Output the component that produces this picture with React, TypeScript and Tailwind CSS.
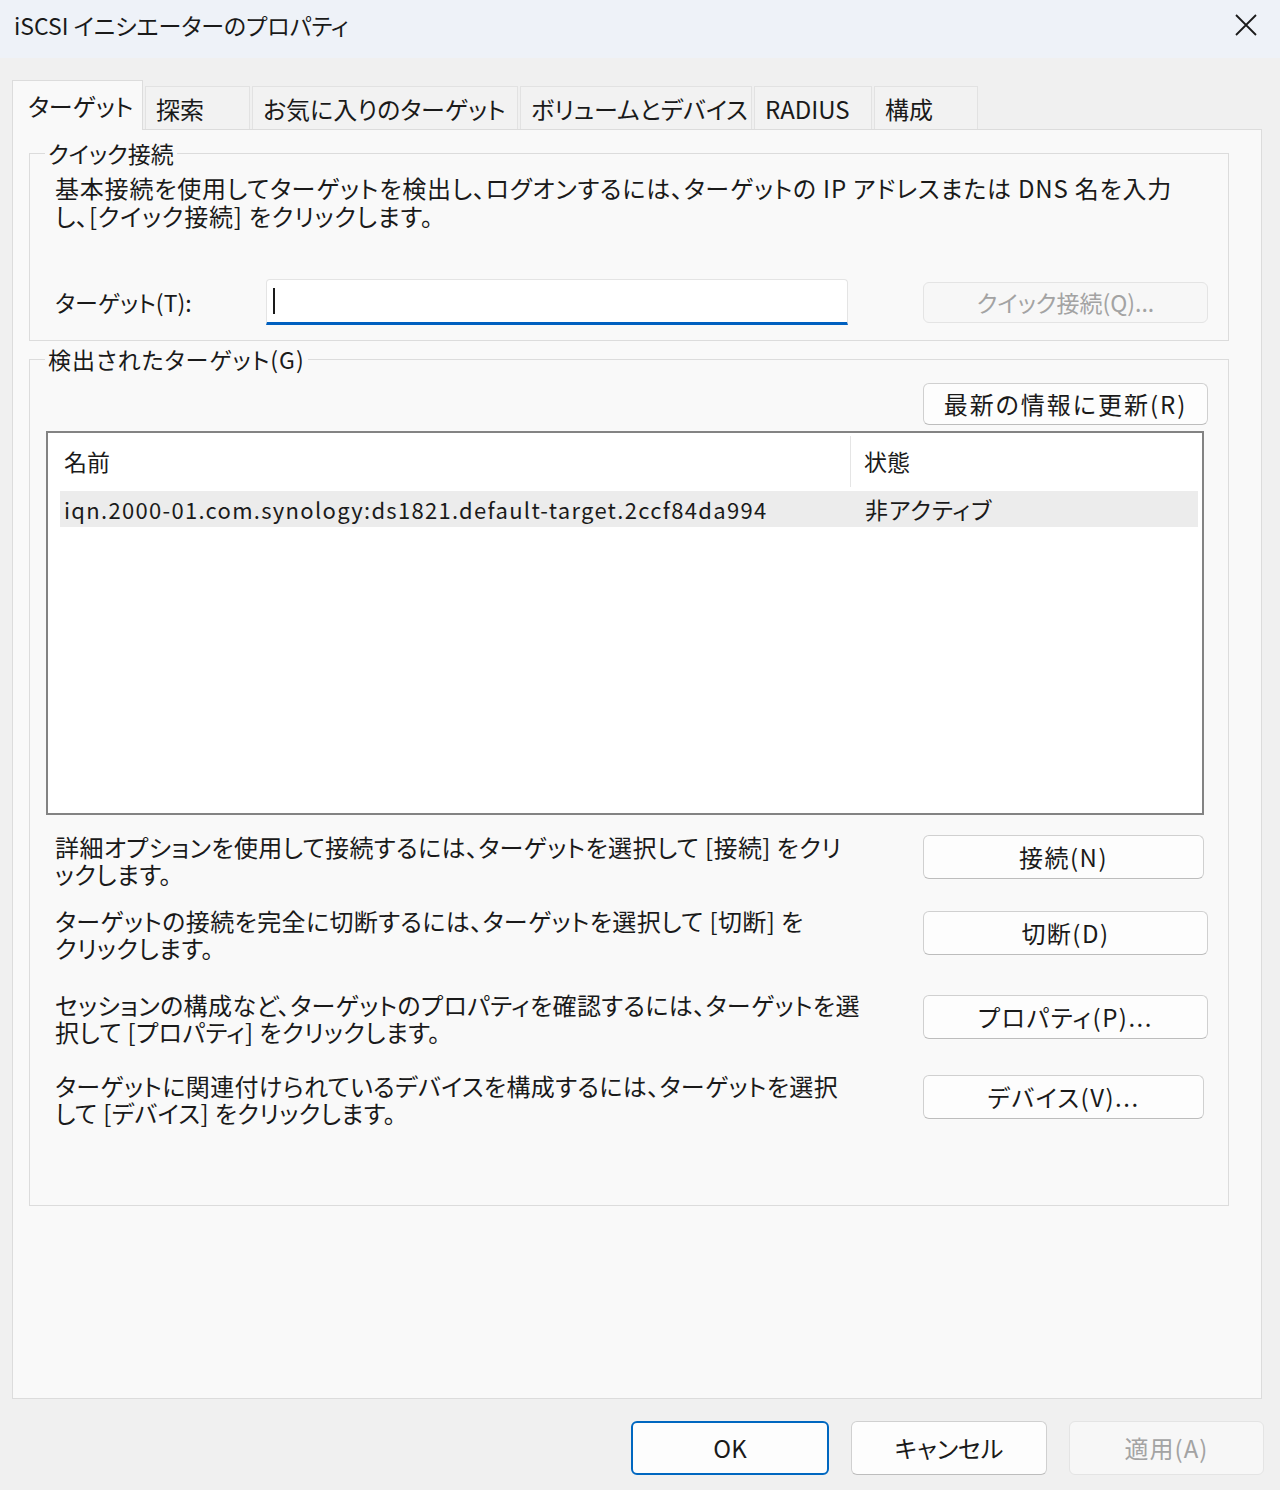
import React from 'react';

type BtnProps = {
  children: React.ReactNode;
  className?: string;
  disabled?: boolean;
  primary?: boolean;
};

const Btn = ({ children, className = '', disabled, primary }: BtnProps) => {
  let look = 'bg-[#fdfdfd] border border-[#d0d0d0] border-b-[#bdbdbd] text-[#1a1a1a]';
  if (disabled) look = 'bg-[#f7f7f7] border border-[#e4e4e4] text-[#a3a3a3]';
  if (primary) look = 'bg-[#fdfdfd] border-2 border-[#0067c0] text-[#1a1a1a]';
  return (
    <button className={`flex items-center justify-center rounded-[6px] leading-none shrink-0 whitespace-nowrap ${look} ${className}`}>
      {children}
    </button>
  );
};

const tabs = [
  { label: '探索', w: 'w-[105px]' },
  { label: 'お気に入りのターゲット', w: 'w-[266px]' },
  { label: 'ボリュームとデバイス', w: 'w-[232px]' },
  { label: 'RADIUS', w: 'w-[118px]' },
  { label: '構成', w: 'w-[104px]' },
];

const actions = [
  {
    lines: ['詳細オプションを使用して接続するには、ターゲットを選択して [接続] をクリ', 'ックします。'],
    btn: '接続(N)',
    gap: 'mt-[18px]',
    btnCls: 'mt-[2px] w-[281px] mr-[4px]',
  },
  {
    lines: ['ターゲットの接続を完全に切断するには、ターゲットを選択して [切断] を', 'クリックします。'],
    btn: '切断(D)',
    gap: 'mt-[20px]',
    btnCls: 'mt-[4px] w-[285px]',
  },
  {
    lines: ['セッションの構成など、ターゲットのプロパティを確認するには、ターゲットを選', '択して [プロパティ] をクリックします。'],
    btn: 'プロパティ(P)...',
    gap: 'mt-[30px]',
    btnCls: 'mt-[4px] w-[285px]',
  },
  {
    lines: ['ターゲットに関連付けられているデバイスを構成するには、ターゲットを選択', 'して [デバイス] をクリックします。'],
    btn: 'デバイス(V)...',
    gap: 'mt-[27px]',
    btnCls: 'mt-[3px] w-[281px] mr-[4px]',
  },
];

export default function App() {
  return (
    <div className="w-[1280px] h-[1490px] overflow-hidden bg-[#f0f0f0] flex flex-col text-[#1a1a1a] font-['Noto_Sans_CJK_JP','Noto_Sans',sans-serif] [font-feature-settings:'palt']">
      {/* Title bar */}
      <div className="h-[58px] shrink-0 bg-[#eef2f8] flex items-start justify-between pl-[14px] pr-[22px]">
        <span className="mt-[9px] text-[23px] leading-[32px]">iSCSI イニシエーターのプロパティ</span>
        <svg className="mt-[13px]" width="24" height="24" viewBox="0 0 24 24">
          <path d="M2 2 L22 22 M22 2 L2 22" stroke="#1a1a1a" strokeWidth="1.8" fill="none" />
        </svg>
      </div>

      {/* Tabs */}
      <div className="mt-[22px] h-[50px] flex items-end pl-[12px] relative z-10">
        <div className="w-[131px] h-[50px] bg-[#f9f9f9] border border-b-0 border-[#dcdcdc] flex items-center pl-[15px] text-[24px] leading-none">
          ターゲット
        </div>
        {tabs.map((t) => (
          <div
            key={t.label}
            className={`${t.w} ml-[2px] mb-[1px] h-[43px] bg-[#f2f2f2] border border-b-0 border-[#e2e2e2] flex items-center pl-[10px] pt-[2px] text-[24px] leading-none`}
          >
            {t.label}
          </div>
        ))}
      </div>

      {/* Tab panel */}
      <div className="mx-[12px] -mt-px h-[1270px] w-[1250px] shrink-0 bg-[#f9f9f9] border border-[#dcdcdc] flex flex-col">
        {/* Quick connect */}
        <fieldset className="ml-[16px] mt-[9px] w-[1200px] border border-[#dcdcdc] pl-[25px] pr-[20px] pb-[15px]">
          <legend className="-ml-[10px] px-[3px] text-[23px] leading-[28px]">クイック接続</legend>
          <div className="mt-[7px] text-[24px] leading-[28px] tracking-[0.8px] whitespace-nowrap">
            <div>基本接続を使用してターゲットを検出し、ログオンするには、ターゲットの IP アドレスまたは DNS 名を入力</div>
            <div>し、[クイック接続] をクリックします。</div>
          </div>
          <div className="mt-[49px] flex items-center">
            <span className="w-[211px] text-[23px] leading-none">ターゲット(T):</span>
            <div className="w-[582px] h-[46px] bg-white border border-[#e4e4e4] border-b-[3px] border-b-[#0060c0] rounded-t-[4px] flex items-center pl-[6px]">
              <div className="w-[2px] h-[26px] bg-[#1a1a1a]" />
            </div>
            <Btn disabled className="ml-auto w-[285px] h-[41px] text-[23px]">クイック接続(Q)...</Btn>
          </div>
        </fieldset>

        {/* Discovered targets */}
        <fieldset className="ml-[16px] mt-[4px] w-[1200px] border border-[#dcdcdc] pl-[25px] pr-[20px] pb-[79px]">
          <legend className="-ml-[10px] px-[3px] text-[23px] leading-[28px] tracking-[1px]">検出されたターゲット(G)</legend>
          <div className="mt-[10px] flex justify-end">
            <Btn className="w-[285px] h-[42px] text-[24px] tracking-[2px]">最新の情報に更新(R)</Btn>
          </div>

          {/* List view */}
          <div className="mt-[6px] -ml-[9px] mr-[4px] h-[384px] bg-white border-2 border-[#838383] flex flex-col">
            <div className="h-[57px] flex text-[23px] leading-none">
              <div className="w-[803px] flex items-center pl-[16px] border-r border-[#e5e5e5] my-[3px]">名前</div>
              <div className="flex-1 flex items-center pl-[13px]">状態</div>
            </div>
            <div className="mt-[1px] ml-[12px] mr-[4px] h-[36px] bg-[#ececec] flex items-center text-[22px] leading-none">
              <div className="w-[791px] pl-[4px] whitespace-nowrap tracking-[1.3px]">iqn.2000-01.com.synology:ds1821.default-target.2ccf84da994</div>
              <div className="pl-[14px] text-[23px] tracking-[1px]">非アクティブ</div>
            </div>
          </div>

          {actions.map((a) => (
            <div key={a.btn} className={`${a.gap} flex items-start justify-between`}>
              <div className="text-[24px] leading-[27px] tracking-[0.4px] whitespace-nowrap">
                {a.lines.map((l) => (
                  <div key={l}>{l}</div>
                ))}
              </div>
              <Btn className={`${a.btnCls} h-[44px] text-[24px] tracking-[1.5px]`}>{a.btn}</Btn>
            </div>
          ))}
        </fieldset>
      </div>

      {/* Dialog buttons */}
      <div className="mt-[22px] flex justify-end gap-[22px] pr-[16px]">
        <Btn primary className="w-[198px] h-[54px] text-[24px]">OK</Btn>
        <Btn className="w-[196px] h-[54px] text-[24px]">キャンセル</Btn>
        <Btn disabled className="w-[195px] h-[54px] text-[24px] tracking-[1px]">適用(A)</Btn>
      </div>
    </div>
  );
}
